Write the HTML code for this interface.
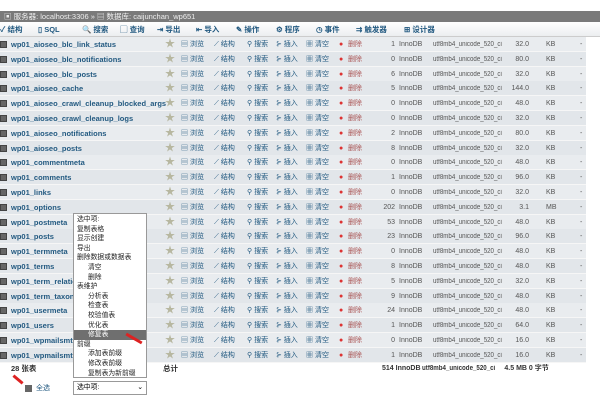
<!DOCTYPE html><html><head><meta charset="utf-8"><style>
*{margin:0;padding:0;box-sizing:border-box}
body{width:600px;height:400px;overflow:hidden;background:#fff;font-family:"Liberation Sans","Noto Sans CJK SC",sans-serif;font-size:8px;position:relative}
.top{position:absolute;left:0;top:11px;width:600px;height:11px;background:#7a7a7a;color:#eee;font-size:7.5px;line-height:11px;padding-left:4px}
.tb{position:absolute;left:0;top:22px;width:600px;height:15px;background:linear-gradient(#fff,#eceef0);border-bottom:1px solid #ccc;font-size:7.5px;line-height:15px;color:#235a81;font-weight:bold}
.tb span{position:absolute}
.r{position:absolute;left:0;width:586px;height:15px;line-height:15px;background:#e9ecef;border-bottom:1px solid #f6f6f6;color:#333}
.r:nth-child(even){background:#e2e6ea}
.r span{position:absolute;white-space:nowrap}
.cb{left:0;top:4px;width:7px;height:7px;background:#666;border:1px solid #444}
.n{left:11px;color:#235a81;font-weight:bold;font-size:7.5px}
.st{left:165px;color:#b7b7a0;font-size:10px}
.a{color:#235a81;font-size:7px}
.num{color:#555;font-size:7px}
.col{left:433px;width:80px;color:#555;font-size:7px;display:inline-block;transform:scaleX(0.88);transform-origin:left}
.m{position:absolute;left:73px;top:213px;width:74px;height:165px;background:#fff;border:1px solid #999;font-size:6.8px;line-height:9.6px;color:#222;padding-top:1px}
.m div{padding-left:3px;height:9.6px;white-space:nowrap}
.m .i{padding-left:14px}
.m .h{background:#6f6f6f;color:#fff}
</style></head><body>
<div class="top">▣ 服务器: localhost:3306 » ▤ 数据库: caijunchan_wp651</div>
<div class="tb"><span style="left:0">✓ 结构</span><span style="left:38px">▯ SQL</span><span style="left:82px">🔍 搜索</span><span style="left:120px">▢ 查询</span><span style="left:157px">⇥ 导出</span><span style="left:196px">⇤ 导入</span><span style="left:236px">✎ 操作</span><span style="left:276px">⚙ 程序</span><span style="left:316px">◷ 事件</span><span style="left:356px">⇉ 触发器</span><span style="left:404px">⊞ 设计器</span></div>
<div id="rows"></div>
<script>
var d=[["wp01_aioseo_blc_link_status",1,"32.0 KB"],["wp01_aioseo_blc_notifications",0,"80.0 KB"],["wp01_aioseo_blc_posts",6,"32.0 KB"],["wp01_aioseo_cache",5,"144.0 KB"],["wp01_aioseo_crawl_cleanup_blocked_args",0,"48.0 KB"],["wp01_aioseo_crawl_cleanup_logs",0,"32.0 KB"],["wp01_aioseo_notifications",2,"80.0 KB"],["wp01_aioseo_posts",8,"32.0 KB"],["wp01_commentmeta",0,"48.0 KB"],["wp01_comments",1,"96.0 KB"],["wp01_links",0,"32.0 KB"],["wp01_options",202,"3.1 MB"],["wp01_postmeta",53,"48.0 KB"],["wp01_posts",23,"96.0 KB"],["wp01_termmeta",0,"48.0 KB"],["wp01_terms",8,"48.0 KB"],["wp01_term_relationships",5,"32.0 KB"],["wp01_term_taxonomy",9,"48.0 KB"],["wp01_usermeta",24,"48.0 KB"],["wp01_users",1,"64.0 KB"],["wp01_wpmailsmtp_debug",0,"16.0 KB"],["wp01_wpmailsmtp_tasks",1,"16.0 KB"]];
var h='';d.forEach(function(r,i){var s=r[2].split(' ');h+='<div class="r" style="top:'+(37+i*14.8)+'px"><span class="cb"></span><span class="n">'+r[0]+'</span><span class="st">★</span><span class="a" style="left:181px">▤ 浏览</span><span class="a" style="left:214px">⟋ 结构</span><span class="a" style="left:247px">⚲ 搜索</span><span class="a" style="left:276px">⊱ 插入</span><span class="a" style="left:306px">▦ 清空</span><span style="left:339px;color:#d33;font-size:7px">●</span><span class="a" style="left:348px;color:#a55">删除</span><span class="num" style="right:191px">'+r[1]+'</span><span class="num" style="left:399px">InnoDB</span><span class="col">utf8mb4_unicode_520_ci</span><span class="num" style="right:57px">'+s[0]+'</span><span class="num" style="left:546px">'+s[1]+'</span><span class="num" style="left:580px">-</span></div>'});
document.getElementById('rows').innerHTML=h;
</script>
<div style="position:absolute;top:363px;left:11px;font-weight:bold;font-size:7.5px;color:#333">28 张表</div>
<div style="position:absolute;top:363px;left:163px;font-weight:bold;font-size:7.5px;color:#333">总计</div>
<div style="position:absolute;top:363px;left:382px;font-weight:bold;font-size:7px;color:#333;white-space:nowrap">514 InnoDB <span style="display:inline-block;transform:scaleX(0.88);transform-origin:left;width:80px">utf8mb4_unicode_520_ci</span> 4.5 MB 0 字节</div>
<div style="position:absolute;top:385px;left:25px;width:7px;height:7px;background:#666"></div>
<div style="position:absolute;top:383px;left:36px;font-size:7px;color:#235a81">全选</div>
<div style="position:absolute;top:381px;left:73px;width:74px;height:14px;border:1px solid #999;font-size:6.8px;line-height:12px;padding-left:3px;background:#fff">选中项:<span style="position:absolute;right:3px">⌄</span></div>
<div class="m"><div>选中项:</div><div>复制表格</div><div>显示创建</div><div>导出</div><div>删除数据或数据表</div><div class="i">清空</div><div class="i">删除</div><div>表维护</div><div class="i">分析表</div><div class="i">检查表</div><div class="i">校验值表</div><div class="i">优化表</div><div class="i h">修复表</div><div>前缀</div><div class="i">添加表前缀</div><div class="i">修改表前缀</div><div class="i">复制表为新前缀</div></div>
<div style="position:absolute;left:125px;top:337px;width:18px;height:3px;background:#d22;transform:rotate(30deg)"></div>
<div style="position:absolute;left:12px;top:378px;width:12px;height:3px;background:#d22;transform:rotate(40deg)"></div>
</body></html>
